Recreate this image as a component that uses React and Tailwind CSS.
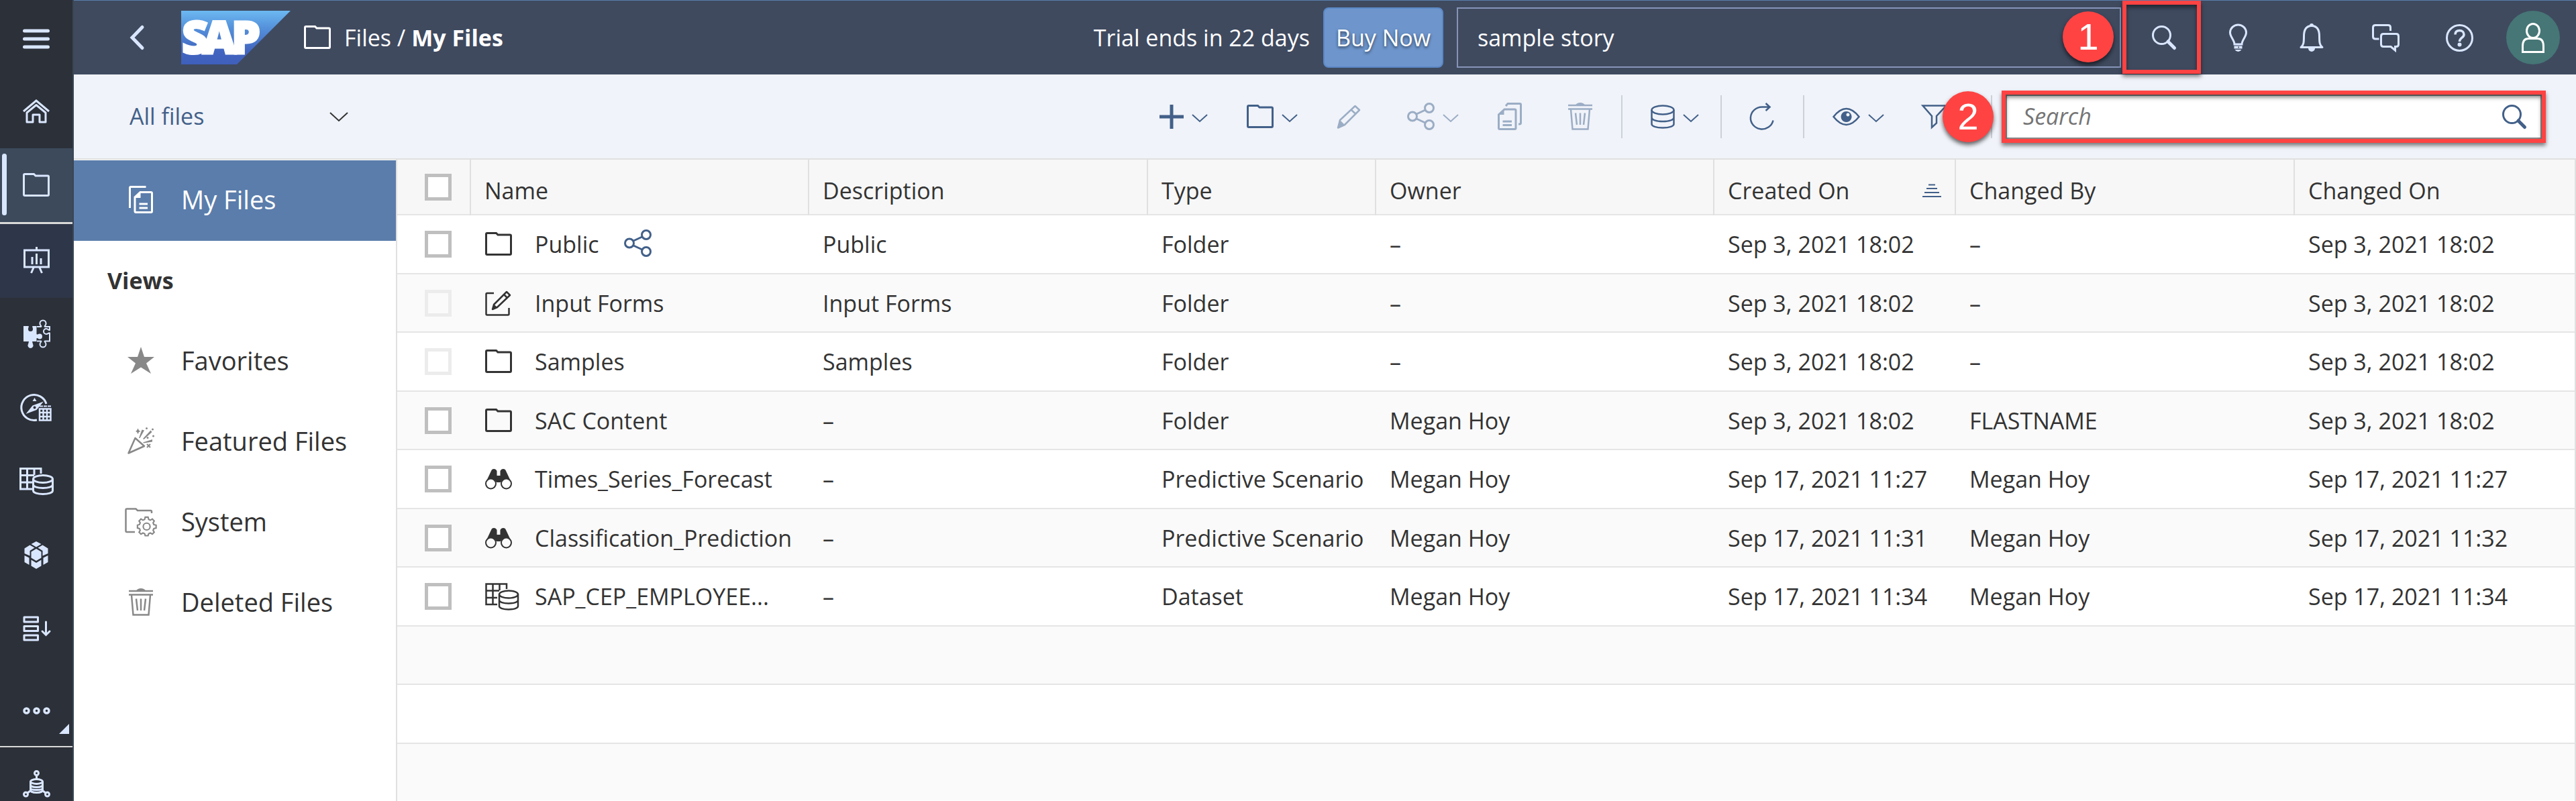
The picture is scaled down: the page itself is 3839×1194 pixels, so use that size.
import React from "react";

/* ---------- icons ---------- */

function Svg({ w, h, sw = 3, className = "", children }) {
  return (
    <svg
      width={w}
      height={h}
      viewBox={`0 0 ${w} ${h}`}
      fill="none"
      stroke="currentColor"
      strokeWidth={sw}
      className={`shrink-0 overflow-visible ${className}`}
      aria-hidden="true"
    >
      {children}
    </svg>
  );
}

const fill = { fill: "currentColor", stroke: "none" };

const FolderIcon = ({ sw = 3 }) => (
  <Svg w={40} h={36} sw={sw}>
    <path d="M3 1.5H16.5L19 4H37q1.5 0 1.5 1.5V32q0 1.5-1.5 1.5H3q-1.5 0-1.5-1.5V3q0-1.5 1.5-1.5Z" />
  </Svg>
);

const ChevronDown = ({ w = 24, h = 12, sw = 2 }) => (
  <Svg w={w} h={h} sw={sw}>
    <path d={`M1 1L${w / 2} ${h - 1}L${w - 1} 1`} />
  </Svg>
);

const HomeIcon = () => (
  <Svg w={40} h={36} sw={3}>
    <path d="M1 18L20 2L39 18" />
    <path d="M6 20L20 8.5L34 20V34H25V23H15V34H6Z" strokeLinejoin="round" />
  </Svg>
);

const EaselIcon = () => (
  <Svg w={39} h={41} sw={3}>
    <path d="M1.5 6H37.5V31H1.5ZM19.5 1V6M15 32L11.5 40M24 32L27.5 40M13 27V16M19.5 27V11M26 27V18" />
  </Svg>
);

const PuzzleIcon = () => (
  <Svg w={41} h={41} sw={2}>
    <path {...fill} d="M1 9H8.5C9.5 10 8 11.500 8 13.500A3.500 3.500 0 0 0 15 13.500C15 11.500 13.500 10 14.500 9H20.500V21C22 22.500 22.500 20.500 25 20.500A4 4 0 0 1 25 28.500C22.500 28.500 22 26 20.500 27.500V32H14L15 36A4 4 0 1 1 8 36L9 32H1Z" />
    <path d="M21 10H27C28.500 9 25 8 25.500 5A4.500 4.500 0 0 1 34.500 5C35 8 31.500 9 33 10H40V15C39 16 37.500 13 35 13A4 4 0 0 0 35 21C37.500 21 39 18.500 40 19.500V31.500H33C31.500 32 34.500 33.500 34.500 36A4.500 4.500 0 0 1 25.500 36C25.500 33.500 28.500 32 27 31.500H21" />
  </Svg>
);

const CompassGridIcon = () => (
  <Svg w={46} h={41} sw={3}>
    <path d="M38 15A19 19 0 1 0 24 39" />
    <path {...fill} d="M20.500 6L23.500 11H17.500Z" />
    <path {...fill} fillRule="evenodd" d="M34 11.500L23.500 24L7.500 30L17.500 17.500ZM20.500 18.500a2 2 0 1 0 .1 0Z" />
    <path d="M28 22.500H44.500V39.500H28ZM33.500 22V40M39 22V40M28 28H44.500M28 34H44.500" strokeWidth="2.500" />
    <path d="M28 18.500H45" strokeWidth="2" strokeDasharray="5 1" />
  </Svg>
);

const GridDbIcon = ({ sw = 3 }) => (
  <Svg w={51} h={41} sw={sw}>
    <path d="M19 32H1.500V1.500H32V9M11.500 1.500V32M22 1.500V11M1.500 11.500H22M1.500 22H19" />
    <ellipse cx="35" cy="17" rx="14.500" ry="5.500" />
    <path d="M20.500 17V34.500C20.500 37.500 27 39.500 35 39.500S49.500 37.500 49.500 34.500V17M20.500 25.500C20.500 28.500 27 30.500 35 30.500S49.500 28.500 49.500 25.500" />
  </Svg>
);

const DatasetIcon = () => (
  <Svg w={51} h={41} sw={2.5}>
    <path d="M18 32H1.500V1.500H32V9M11.500 1.500V32M21.500 1.500V11M1.500 11.500H21M1.500 22H18" />
    <ellipse cx="35" cy="17" rx="14" ry="5.500" />
    <path d="M21 17V34.500C21 37.500 27 39.500 35 39.500S49 37.500 49 34.500V17M21 25.500C21 28.500 27 30.500 35 30.500S49 28.500 49 25.500" />
  </Svg>
);

const CubeIcon = () => (
  <Svg w={36} h={41}>
    <path {...fill} d="M18 0L25.500 4L18 8.500L10.500 4ZM8.500 5.500L15.500 9.500L8.500 14V21.500L.5 18V10.500ZM27.500 5.500L20.500 9.500L27.500 14V21.500L35.500 18V10.500ZM18 11L25.500 15.500V24.500L18 29L10.500 24.500V15.500ZM.5 21L7.500 24.500V35L.5 31ZM35.500 21L28.500 24.500V35L35.500 31ZM10.500 27.500L18 32L25.500 27.500V36.500L18 41L10.500 36.500Z" />
  </Svg>
);

const ListDownIcon = () => (
  <Svg w={41} h={38} sw={3}>
    <path d="M2 2H22.500V9H2ZM2 15.500H22.500V22.500H2ZM2 29H22.500V36H2Z" strokeLinejoin="round" />
    <path d="M34.500 9V28M29 23L34.500 28.500L40 23" strokeLinecap="round" />
  </Svg>
);

const DotsIcon = () => (
  <Svg w={41} h={11} sw={3.5}>
    <circle cx="5.500" cy="5.500" r="3.500" />
    <circle cx="20.500" cy="5.500" r="3.500" />
    <circle cx="35.500" cy="5.500" r="3.500" />
  </Svg>
);

const DbNetworkIcon = () => (
  <Svg w={41} h={41} sw={3}>
    <circle cx="20.500" cy="4.500" r="3" />
    <circle cx="4.500" cy="36" r="3" />
    <circle cx="36.500" cy="36" r="3" />
    <path d="M20.500 8V13M11 31L7 34M30 31L34 34" />
    <ellipse cx="20.500" cy="17" rx="9" ry="3.500" />
    <path d="M11.500 17V30C11.500 32 15 33.500 20.500 33.500S29.500 32 29.500 30V17M11.500 22C11.500 24 15 25.500 20.500 25.500S29.500 24 29.500 22M11.500 26.500C11.500 28.500 15 29.500 20.500 29.500S29.500 28.500 29.500 26.500" />
  </Svg>
);

const SearchIcon = () => (
  <Svg w={36} h={36} sw={3}>
    <circle cx="14.500" cy="14.500" r="13" />
    <path d="M24 24L33.500 33.500" strokeWidth="5" strokeLinecap="round" />
  </Svg>
);

const BulbIcon = () => (
  <Svg w={27} h={41} sw={3}>
    <path d="M8 30C8 24 1.500 19 1.500 12.500A12 11.500 0 0 1 25.500 12.500C25.500 19 19 24 19 30Z" />
    <path {...fill} fillRule="evenodd" d="M7.500 32.500H19.500V36.500H7.500ZM13.500 33.500V35.500H15V33.500Z" />
    <path {...fill} d="M8.500 38H18.500Q16.500 41 13.500 41T8.500 38Z" />
  </Svg>
);

const BellIcon = () => (
  <Svg w={36} h={42} sw={3}>
    <path d="M2 35.500C6 33 6.500 28 6.500 19C6.500 9 10 3.500 18 3.500S29.500 9 29.500 19C29.500 28 30 33 34 35.500Z" strokeLinejoin="round" />
    <path {...fill} d="M15 3a3 3 0 0 1 6 0ZM13 37H23a5 5 0 0 1-10 0Z" />
  </Svg>
);

const ChatIcon = () => (
  <Svg w={41} h={41} sw={3}>
    <path d="M10.500 22H5Q1.500 22 1.500 18.500V5Q1.500 1.500 5 1.500H24Q27.500 1.500 27.500 5V10" />
    <path d="M17 14.500H36Q39.500 14.500 39.500 18V30Q39.500 33.500 36 33.500H34.500V39L28 33.500H17Q13.500 33.500 13.500 30V18Q13.500 14.500 17 14.500Z" />
  </Svg>
);

const HelpIcon = () => (
  <Svg w={41} h={41} sw={3}>
    <circle cx="20.500" cy="20.500" r="19" />
    <path d="M14 15.500C14 11.500 16.500 9.500 20.500 9.500S27 12 27 15.500C27 20.500 20.500 20 20.500 26" strokeWidth="3.500" />
    <circle {...fill} cx="20.500" cy="30.500" r="3" />
  </Svg>
);

const PersonIcon = () => (
  <Svg w={34} h={45} sw={3}>
    <ellipse cx="17" cy="12" rx="9.500" ry="10.500" />
    <path d="M1.500 43.500V35Q1.500 23.500 10 23.500H24Q32.500 23.500 32.500 35V43.500Z" />
  </Svg>
);

const PlusIcon = () => (
  <Svg w={36} h={36} sw={5}>
    <path d="M0 18H36M18 0V36" />
  </Svg>
);

const PencilIcon = () => (
  <Svg w={36} h={36} sw={2.5}>
    <path d="M5 23L27.500 2L34 8L12 30L2 34.500ZM21.500 7.500L28 13.500" strokeLinejoin="round" />
    <path {...fill} d="M5 23L12 30L1 35Z" />
  </Svg>
);

const ShareIcon = () => (
  <Svg w={41} h={41} sw={3}>
    <circle cx="8" cy="20.500" r="6.500" />
    <circle cx="33" cy="8" r="6.500" />
    <circle cx="33" cy="33" r="6.500" />
    <path d="M14 17L27 11M14 24L27 30" />
  </Svg>
);

const CopyIcon = () => (
  <Svg w={36} h={41} sw={3}>
    <path d="M12 5L15 1.500H33Q34.500 1.500 34.500 3V30Q34.500 32 32.500 32H31" />
    <path d="M10 10H25.500Q27 10 27 11.500V38Q27 39.500 25.500 39.500H3Q1.500 39.500 1.500 38V18ZM7.500 28H21M7.500 33.500H21" />
    <path {...fill} d="M9.500 9V18H1Z" />
  </Svg>
);

const MyFilesIcon = () => (
  <Svg w={36} h={41} sw={3}>
    <path d="M25.500 1.500H3Q1.500 1.500 1.500 3V33" />
    <path d="M17 9.500H33Q34.500 9.500 34.500 11V38Q34.500 39.500 33 39.500H10.500Q9 39.500 9 38V17ZM15.500 27H28M15.500 33H28" />
    <path {...fill} d="M17.500 9V18H8.500Z" />
  </Svg>
);

const TrashIcon = () => (
  <Svg w={36} h={41} sw={2.5}>
    <path {...fill} d="M11 3.500Q13 0 18 0T25 3.500Z" />
    <path d="M0 4H36M0 9.500H36M4 10L6.500 39.500H29.500L32 10M11 15.500L13 33M18 15.500V33M25 15.500L23 33" />
  </Svg>
);

const DatabaseIcon = () => (
  <Svg w={36} h={36} sw={2.5}>
    <ellipse cx="18" cy="8" rx="16.500" ry="6.500" />
    <path d="M1.500 8V29C1.500 32 8 34.500 18 34.500S34.500 32 34.500 29V8M1.500 19C1.500 22.500 8 25 18 25S34.500 22.500 34.500 19" />
  </Svg>
);

const RefreshIcon = () => (
  <Svg w={36} h={41} sw={2.5}>
    <path d="M34.500 26.500A17 16.500 0 1 1 18 6.500H29M23.500 1L29.500 6.500L23.500 12" />
  </Svg>
);

const EyeIcon = () => (
  <Svg w={41} h={26} sw={2.5}>
    <path d="M1.500 13Q20.500-11 39.500 13Q20.500 37 1.500 13Z" />
    <path {...fill} fillRule="evenodd" d="M20.500 5a8 8 0 1 0 .1 0ZM23 7.500a2.500 2.500 0 1 1-.1 0Z" />
  </Svg>
);

const FilterIcon = () => (
  <Svg w={38} h={36} sw={2.5}>
    <path d="M1.500 1.500H36.500L22 17V27.500L15 34V17Z" />
  </Svg>
);

const SortIcon = () => (
  <Svg w={28} h={20} sw={2}>
    <path d="M9 1.500H19M6 7H22M3 13H25M0 19H28" />
  </Svg>
);

const StarIcon = () => (
  <Svg w={40} h={40}>
    <path {...fill} d="M20 0L25 15H40L28 24.500L35 40L20 30.500L5 40L12 24.500L0 15H15Z" />
  </Svg>
);

const PartyIcon = () => (
  <Svg w={40} h={40} sw={2.5}>
    <path d="M1.500 38.500L11.500 16L25 28Z" strokeLinejoin="round" />
    <path {...fill} d="M17 16L21.500 3.500L25 4.500L18.500 16ZM23 17L34.500 4.500L36.500 7L24.500 18ZM23 22.500L37 18V21.500L24 23.500ZM15.500 1.500L17 4.500L19.500 6L17 7L15.500 10L14 7L12 6L14 4.500Z" />
    <path d="M29 25L34 30M34 25L29 30" strokeWidth="2" />
    <circle {...fill} cx="28.500" cy="1.500" r="1.500" />
    <circle {...fill} cx="37.500" cy="3" r="1.500" />
    <circle {...fill} cx="38.500" cy="13" r="1.500" />
    <circle {...fill} cx="30" cy="15.500" r="1.500" />
  </Svg>
);

const GearPath = () => (
  <path d="M30.500 11h5l1 4 3 1.300 3.500-2 3.300 3.400-2 3.400 1.300 3 4 1v5l-4 1-1.300 3 2 3.400-3.300 3.300-3.500-2-3 1.300-1 3.500h-5l-1-3.500-3-1.300-3.500 2-3.300-3.300 2-3.400-1.300-3-3.500-1v-5l3.500-1 1.300-3-2-3.400 3.300-3.400 3.500 2 3-1.300Z" />
);

const FolderGearIcon = () => (
  <Svg w={49} h={41} sw={2.5}>
    <path d="M15 36H3Q1.500 36 1.500 34.500V3Q1.500 1.500 3 1.500H16.500L19 4H38.500Q40 4 40 5.500V8" />
    <g transform="translate(4.500 4.500) scale(0.850)">
      <GearPath />
      <circle cx="33" cy="27.500" r="6" />
    </g>
  </Svg>
);

const FormEditIcon = () => (
  <Svg w={38} h={38} sw={2.5}>
    <path d="M13 4H3Q1.500 4 1.500 5.500V35Q1.500 36.500 3 36.500H34Q35.500 36.500 35.500 35V26" />
    <path d="M13 21L32 2L37 7L18 25L11 28ZM28 6L33 11" strokeLinejoin="round" />
    <path {...fill} d="M13 20.500L18.500 25.500L10 29Z" />
  </Svg>
);

const BinocularsIcon = () => (
  <Svg w={40} h={30} sw={2}>
    <path {...fill} d="M1 20L9 3Q10 0 13 0T17.500 3V10H22.500V3Q24 0 27 0T31 3L39 20Q36 14 31 14.500T23 20H17Q14 15 9 14.500T1 20Z" />
    <circle cx="8.500" cy="22" r="7.500" />
    <circle cx="31.500" cy="22" r="7.500" />
  </Svg>
);

const SapLogo = () => (
  <svg width="163" height="80" viewBox="0 0 163 80" role="img" aria-label="SAP" className="shrink-0 overflow-visible">
    <defs>
      <linearGradient id="sapBlue" x1="0" y1="0" x2="0" y2="1">
        <stop offset="0" stopColor="#6cb9f2" />
        <stop offset="0.300" stopColor="#5693dc" />
        <stop offset="0.750" stopColor="#4265c0" />
        <stop offset="1" stopColor="#3f5fbb" />
      </linearGradient>
    </defs>
    <path d="M0 0H163L83 80H0Z" fill="url(#sapBlue)" />
    <text
      x="1 32 75"
      y="64"
      fill="#fff"
      stroke="#fff"
      strokeWidth="3"
      fontFamily="Open Sans, sans-serif"
      fontWeight="800"
      fontSize="68"
    >
      SAP
    </text>
  </svg>
);

/* ---------- shared pieces ---------- */

const Badge = ({ n, className }) => (
  <span
    className={`absolute z-20 flex size-19 items-center justify-center rounded-full bg-[#ff4343] font-['Liberation_Sans',sans-serif] text-[56px] leading-none text-white shadow-[0_4px_6px_rgba(0,0,0,0.6)] ${className}`}
  >
    {n}
  </span>
);

const Frame = ({ className }) => (
  <span
    className={`pointer-events-none absolute z-10 border-6 border-[#ff4343] shadow-[0_4px_6px_rgba(0,0,0,0.5),inset_0_4px_6px_rgba(0,0,0,0.5)] ${className}`}
  />
);

const Check = ({ label, disabled }) => (
  <input
    type="checkbox"
    aria-label={label}
    disabled={disabled}
    className="block size-10 appearance-none border-5 border-[#bfbfbf] bg-white disabled:border-[#ececec] disabled:bg-transparent"
  />
);

const SideButton = ({ label, className = "h-[110px] pb-1", children }) => (
  <button type="button" aria-label={label} className={`relative flex w-full items-center justify-center ${className}`}>
    {children}
  </button>
);

function SideRail() {
  return (
    <nav
      aria-label="Main"
      className="flex w-[110px] shrink-0 flex-col border-r-2 border-[#3a4554] bg-[#2c3038] text-[#d9e6ff]"
    >
      <SideButton label="Menu" className="h-[111px] pt-1">
        <Svg w={40} h={30} sw={5}>
          <path d="M2.500 3H37.500M2.500 15H37.500M2.500 27H37.500" strokeLinecap="round" />
        </Svg>
      </SideButton>
      <SideButton label="Home" className="h-[110px]"><HomeIcon /></SideButton>
      <SideButton label="Files" className="h-[110px] bg-[#3c4a5c]">
        <span className="absolute left-[3px] top-2 h-[92px] w-[7px] rounded-full bg-[#d9e6ff]" />
        <FolderIcon />
      </SideButton>
      <div className="h-[3px] bg-[#d9d9d9]" />
      <SideButton label="Stories" className="h-[110px] bg-[#2e3749] pb-1"><EaselIcon /></SideButton>
      <SideButton label="Analytic Applications"><PuzzleIcon /></SideButton>
      <SideButton label="Data Analyzer"><CompassGridIcon /></SideButton>
      <SideButton label="Datasets"><GridDbIcon /></SideButton>
      <SideButton label="Modeler"><CubeIcon /></SideButton>
      <SideButton label="Value Driver Trees"><ListDownIcon /></SideButton>
      <SideButton label="More" className="h-[118px] pt-3">
        <DotsIcon />
        <svg width="15" height="15" viewBox="0 0 15 15" className="absolute bottom-[18px] right-[5px]" aria-hidden="true">
          <path d="M15 0V15H0Z" fill="#d9e6ff" />
        </svg>
      </SideButton>
      <div className="h-[2px] bg-[#d9d9d9]" />
      <SideButton label="Connections" className="h-20 pt-7"><DbNetworkIcon /></SideButton>
    </nav>
  );
}

const HeaderButton = ({ label, children }) => (
  <button type="button" aria-label={label} className="flex h-full w-[110px] items-center justify-center">
    {children}
  </button>
);

function Header() {
  return (
    <header className="flex h-[111px] items-center border-t border-[#5b7dab] bg-[#3f4a5f] text-[34px] text-white">
      <button type="button" aria-label="Back" className="ml-[84px] text-[#d9e6ff]">
        <Svg w={21} h={36} sw={5}>
          <path d="M18 2.500L3 18L18 33.500" strokeLinecap="round" />
        </Svg>
      </button>
      <div className="ml-[55px]"><SapLogo /></div>
      <div className="ml-5 flex items-center gap-5 whitespace-nowrap">
        <FolderIcon />
        <p>
          <a href="#files">Files</a> / <b className="font-bold">My Files</b>
        </p>
      </div>
      <p className="ml-auto whitespace-nowrap">Trial ends in 22 days</p>
      <button
        type="button"
        className="ml-5 h-[90px] w-[179px] shrink-0 whitespace-nowrap rounded-lg border-2 border-[#5b87c5] bg-[#6e96cd] [text-shadow:0_2px_4px_rgba(0,0,0,0.6)]"
      >
        Buy Now
      </button>
      <input
        type="text"
        aria-label="Search everything"
        defaultValue="sample story"
        className="ml-5 h-[90px] w-[990px] min-w-0 border-2 border-[#8794b8] bg-transparent px-[29px] outline-none"
      />
      <div className="ml-[9px] mr-[9px] flex h-full shrink-0 items-center text-[#d9e6ff]">
        <div className="relative h-full">
          <HeaderButton label="Search"><SearchIcon /></HeaderButton>
          <Frame className="-left-[7px] top-0 h-[109px] w-[117px]" />
          <Badge n="1" className="right-[130px] top-4" />
        </div>
        <HeaderButton label="Insights"><BulbIcon /></HeaderButton>
        <HeaderButton label="Notifications"><BellIcon /></HeaderButton>
        <HeaderButton label="Discussions"><ChatIcon /></HeaderButton>
        <HeaderButton label="Help"><HelpIcon /></HeaderButton>
        <HeaderButton label="Profile">
          <span className="flex size-20 items-center justify-center rounded-full bg-[#467676] text-white">
            <PersonIcon />
          </span>
        </HeaderButton>
      </div>
    </header>
  );
}

const ToolButton = ({ label, menu, className = "", children }) => (
  <button type="button" aria-label={label} className={`flex h-16 items-center gap-3 ${className}`}>
    {children}
    {menu && <span className="pt-1"><ChevronDown /></span>}
  </button>
);

const ToolSeparator = ({ className = "" }) => <span className={`h-16 w-[2px] bg-[#ccd1d8] ${className}`} />;

function Toolbar() {
  return (
    <div className="flex h-[127px] items-center border-b-2 border-[#e0e0e0] bg-[#f0f3f9] text-[#426089]">
      <div className="relative ml-[83px] w-[326px]">
        <select aria-label="File filter" className="w-full appearance-none bg-transparent text-[34px] outline-none">
          <option>All files</option>
        </select>
        <span className="pointer-events-none absolute inset-y-0 right-0 flex items-center text-[#333]">
          <ChevronDown w={28} h={14} />
        </span>
      </div>
      <div className="ml-auto flex shrink-0 items-center">
        <ToolButton label="Create" menu><PlusIcon /></ToolButton>
        <ToolButton label="New folder" menu className="ml-[58px]"><FolderIcon /></ToolButton>
        <div className="ml-[58px] flex items-center text-[#9badc5]">
          <ToolButton label="Edit"><PencilIcon /></ToolButton>
          <ToolButton label="Share" menu className="ml-[69px]"><ShareIcon /></ToolButton>
          <ToolButton label="Copy" className="ml-[58px]"><CopyIcon /></ToolButton>
          <ToolButton label="Delete" className="ml-[69px]"><TrashIcon /></ToolButton>
        </div>
        <ToolSeparator className="ml-[43px]" />
        <ToolButton label="Data source" menu className="ml-[42px]"><DatabaseIcon /></ToolButton>
        <ToolSeparator className="ml-[32px]" />
        <ToolButton label="Refresh" className="ml-[42px]"><RefreshIcon /></ToolButton>
        <ToolSeparator className="ml-[43px]" />
        <ToolButton label="View" menu className="ml-[42px]"><EyeIcon /></ToolButton>
        <ToolButton label="Filter" className="ml-[56px]"><FilterIcon /></ToolButton>
        <ToolSeparator className="ml-[65px]" />
      </div>
      <div className="relative ml-5 mr-[51px] h-[66px] w-[799px]">
        <div className="flex h-full items-center border-2 border-[#8c8c8c] bg-white pl-6 pr-[21px]">
          <input
            type="search"
            aria-label="Search files"
            placeholder="Search"
            className="min-w-0 flex-1 bg-transparent text-[34px] text-[#333] italic outline-none placeholder:text-[#757575]"
          />
          <button type="button" aria-label="Run search"><SearchIcon /></button>
        </div>
        <Frame className="-inset-[6px]" />
        <Badge n="2" className="-left-[94px] -top-[5px]" />
      </div>
    </div>
  );
}

const views = [
  { label: "Favorites", Icon: StarIcon },
  { label: "Featured Files", Icon: PartyIcon },
  { label: "System", Icon: FolderGearIcon },
  { label: "Deleted Files", Icon: TrashIcon },
];

const FileLink = ({ label, Icon, active }) => (
  <a
    href="#view"
    className={
      active
        ? "flex h-[120px] items-center bg-[#5b7dab] pb-1 text-white"
        : "flex h-[120px] items-center text-[#333]"
    }
  >
    <span className={active ? "ml-[75px] flex w-[50px] justify-center" : "ml-[75px] flex w-[50px] justify-center text-[#888]"}>
      <Icon />
    </span>
    <span className="ml-[35px] text-[38px]">{label}</span>
  </a>
);

function FilePanel() {
  return (
    <aside className="w-[480px] shrink-0 bg-white pt-px">
      <FileLink label="My Files" Icon={MyFilesIcon} active />
      <h2 className="flex h-[118px] items-center pl-[50px] text-[34px] font-bold text-[#333]">Views</h2>
      {views.map((v) => (
        <FileLink key={v.label} {...v} />
      ))}
    </aside>
  );
}

const files = [
  { icon: FolderIcon, name: "Public", desc: "Public", type: "Folder", owner: "–", created: "Sep 3, 2021 18:02", by: "–", changed: "Sep 3, 2021 18:02", shared: true },
  { icon: FormEditIcon, name: "Input Forms", desc: "Input Forms", type: "Folder", owner: "–", created: "Sep 3, 2021 18:02", by: "–", changed: "Sep 3, 2021 18:02", locked: true },
  { icon: FolderIcon, name: "Samples", desc: "Samples", type: "Folder", owner: "–", created: "Sep 3, 2021 18:02", by: "–", changed: "Sep 3, 2021 18:02", locked: true },
  { icon: FolderIcon, name: "SAC Content", desc: "–", type: "Folder", owner: "Megan Hoy", created: "Sep 3, 2021 18:02", by: "FLASTNAME", changed: "Sep 3, 2021 18:02" },
  { icon: BinocularsIcon, name: "Times_Series_Forecast", desc: "–", type: "Predictive Scenario", owner: "Megan Hoy", created: "Sep 17, 2021 11:27", by: "Megan Hoy", changed: "Sep 17, 2021 11:27" },
  { icon: BinocularsIcon, name: "Classification_Prediction", desc: "–", type: "Predictive Scenario", owner: "Megan Hoy", created: "Sep 17, 2021 11:31", by: "Megan Hoy", changed: "Sep 17, 2021 11:32" },
  { icon: DatasetIcon, name: "SAP_CEP_EMPLOYEE...", desc: "–", type: "Dataset", owner: "Megan Hoy", created: "Sep 17, 2021 11:34", by: "Megan Hoy", changed: "Sep 17, 2021 11:34" },
];

const rowClass =
  "h-[87px] border-b-2 border-[#e5e5e5] odd:h-[88px] odd:bg-white even:bg-[#fafafa]";

const HeadCell = ({ children }) => (
  <th scope="col" className="border-r-2 border-[#e0e0e0] px-5 pt-[10px] text-left font-normal last:border-r-0">
    {children}
  </th>
);

const Cell = ({ children }) => <td className="px-[21px]">{children}</td>;

function FileTable() {
  return (
    <main className="min-w-0 flex-1 border-x-2 border-[#e0e0e0] bg-white">
      <table className="w-full table-fixed border-collapse whitespace-nowrap text-[34px] leading-[46px] text-[#333]">
        <colgroup>
          <col className="w-[109px]" />
          <col className="w-[504px]" />
          <col className="w-[505px]" />
          <col className="w-[340px]" />
          <col className="w-[504px]" />
          <col className="w-[360px]" />
          <col className="w-[505px]" />
          <col />
        </colgroup>
        <thead>
          <tr className="h-[82px] border-b-2 border-[#e5e5e5] bg-[#f7f7f7]">
            <th scope="col" className="border-r-2 border-[#e0e0e0] pl-[41px]">
              <Check label="Select all" />
            </th>
            <HeadCell>Name</HeadCell>
            <HeadCell>Description</HeadCell>
            <HeadCell>Type</HeadCell>
            <HeadCell>Owner</HeadCell>
            <HeadCell>
              <span className="flex items-center justify-between">
                Created On
                <span className="text-[#426089]"><SortIcon /></span>
              </span>
            </HeadCell>
            <HeadCell>Changed By</HeadCell>
            <HeadCell>Changed On</HeadCell>
          </tr>
        </thead>
        <tbody>
          {files.map((f) => (
            <tr key={f.name} className={rowClass}>
              <td className="pl-[41px]"><Check label={`Select ${f.name}`} disabled={f.locked} /></td>
              <td className="pl-[22px]">
                <span className="flex items-center">
                  <span className="flex w-[40px] shrink-0"><f.icon sw={3} /></span>
                  <span className="ml-[34px]">{f.name}</span>
                  {f.shared && <span className="ml-[37px] pb-1 text-[#426089]"><ShareIcon /></span>}
                </span>
              </td>
              <Cell>{f.desc}</Cell>
              <Cell>{f.type}</Cell>
              <Cell>{f.owner}</Cell>
              <Cell>{f.created}</Cell>
              <Cell>{f.by}</Cell>
              <Cell>{f.changed}</Cell>
            </tr>
          ))}
          <tr className={rowClass}><td colSpan={8} /></tr>
          <tr className={rowClass}><td colSpan={8} /></tr>
          <tr className="h-[85px] bg-[#fafafa]"><td colSpan={8} /></tr>
        </tbody>
      </table>
    </main>
  );
}

export default function App() {
  return (
    <div className="flex min-h-screen bg-white font-['Open_Sans','Noto_Sans',sans-serif]">
      <SideRail />
      <div className="flex min-w-0 flex-1 flex-col">
        <Header />
        <Toolbar />
        <div className="flex flex-1">
          <FilePanel />
          <FileTable />
        </div>
      </div>
    </div>
  );
}
